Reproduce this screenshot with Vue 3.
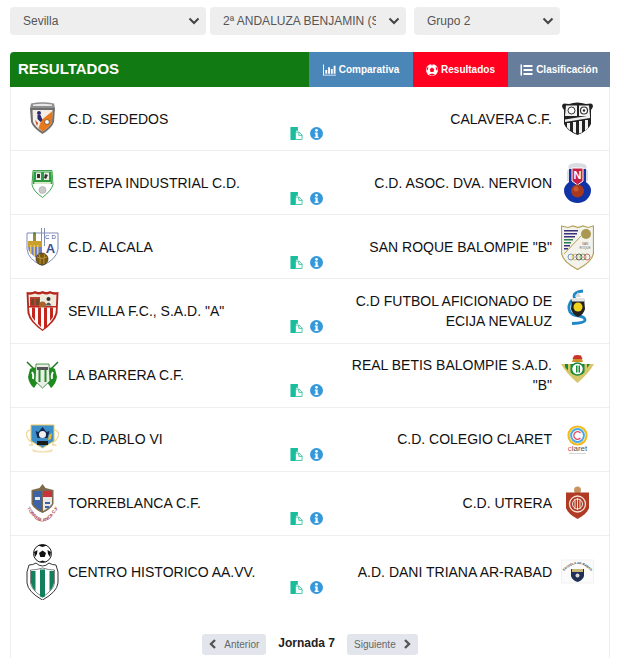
<template>
  <div class="page">
    <div class="filters">
      <div v-for="f in filters" :key="f.value" class="select-wrap" :class="f.size">
        <select class="select">
          <option>{{ f.value }}</option>
        </select>
        <svg class="chevron" viewBox="0 0 12 8"><path d="M1.500 1.500 6 6l4.500-4.500" /></svg>
      </div>
    </div>

    <div class="panel">
      <div class="panel-head">
        <div class="title">RESULTADOS</div>
        <a class="tab tab-blue">
          <svg class="tab-icon" viewBox="0 0 14 12">
            <path d="M0 0h1v11h13v1H0z" />
            <path d="M2.500 6h2v4h-2zM5.500 3h2v7h-2zM8.500 5h2v5h-2zM11.500 1.500h2V10h-2z" />
          </svg>
          Comparativa
        </a>
        <a class="tab tab-red">
          <svg class="tab-icon ball" viewBox="0 0 12 12">
            <circle cx="6" cy="6" r="6" fill="#fff" />
            <path d="M6 3.600 8.300 5.300 7.400 8H4.600L3.700 5.300zM4.200 .6 6 1.500 7.800.6 6 .2zM.6 4.200l.3 2.800 1.100-1.800.3-2.400zM11.400 4.200l-.3 2.800-1.100-1.800-.3-2.400zM3 10.600l2-.9h2l2 .9-3 1.100z" fill="#ff0021" />
          </svg>
          Resultados
        </a>
        <a class="tab tab-slate">
          <svg class="tab-icon" viewBox="0 0 12 12">
            <path d="M0 .5h1.500v11H0zM3 1h9v2H3zM3 5h9v2H3zM3 9h9v2H3z" />
          </svg>
          Clasificación
        </a>
      </div>

      <div v-for="m in matches" :key="m.home" class="match">
        <div class="team">
          <svg class="crest" :height="crests[m.homeCrest].h" :viewBox="`0 0 33 ${crests[m.homeCrest].h}`" v-html="crests[m.homeCrest].art"></svg>
          <span class="name">{{ m.home }}</span>
        </div>
        <div class="actions">
          <svg class="act" viewBox="0 0 13 14">
            <path d="M0 0h8v4H6v10H0z" fill="#1abc9c" />
            <path d="M5.500 5.500h3.800l3.200 3v5h-7z" fill="#fff" stroke="#3cc4a6" />
            <path d="M9 5.500V9h3.500" fill="none" stroke="#3cc4a6" />
          </svg>
          <svg class="act" viewBox="0 0 13 13">
            <circle cx="6.500" cy="6.500" r="6.500" fill="#3498db" />
            <circle cx="6.500" cy="3.300" r="1.400" fill="#fff" />
            <path d="M4.800 5.400h2.900v4.300h.9v1.300H4.600V9.700h.9V6.700h-.7z" fill="#fff" />
          </svg>
        </div>
        <div class="team team-away">
          <span class="name">{{ m.away }}</span>
          <svg class="crest" :height="crests[m.awayCrest].h" :viewBox="`0 0 33 ${crests[m.awayCrest].h}`" v-html="crests[m.awayCrest].art"></svg>
        </div>
      </div>

      <div class="pager">
        <button class="page-btn">
          <svg class="arrow" viewBox="0 0 8 10"><path d="M6 1 2 5l4 4" /></svg>
          Anterior
        </button>
        <span class="round">Jornada 7</span>
        <button class="page-btn">
          Siguiente
          <svg class="arrow" viewBox="0 0 8 10"><path d="m2 1 4 4-4 4" /></svg>
        </button>
      </div>
    </div>
  </div>
</template>

<script setup>
const filters = [
  { value: "Sevilla", size: "wide" },
  { value: "2ª ANDALUZA BENJAMIN (SEVILLA)", size: "wide" },
  { value: "Grupo 2", size: "small" },
];

const matches = [
  { home: "C.D. SEDEDOS", homeCrest: "sededos", away: "CALAVERA C.F.", awayCrest: "calavera" },
  { home: "ESTEPA INDUSTRIAL C.D.", homeCrest: "estepa", away: "C.D. ASOC. DVA. NERVION", awayCrest: "nervion" },
  { home: "C.D. ALCALA", homeCrest: "alcala", away: 'SAN ROQUE BALOMPIE "B"', awayCrest: "roque" },
  { home: 'SEVILLA F.C., S.A.D. "A"', homeCrest: "sevilla", away: "C.D FUTBOL AFICIONADO DE ECIJA NEVALUZ", awayCrest: "ecija" },
  { home: "LA BARRERA C.F.", homeCrest: "barrera", away: 'REAL BETIS BALOMPIE S.A.D. "B"', awayCrest: "betis" },
  { home: "C.D. PABLO VI", homeCrest: "pablo", away: "C.D. COLEGIO CLARET", awayCrest: "claret" },
  { home: "TORREBLANCA C.F.", homeCrest: "torreblanca", away: "C.D. UTRERA", awayCrest: "utrera" },
  { home: "CENTRO HISTORICO AA.VV.", homeCrest: "centro", away: "A.D. DANI TRIANA AR-RABAD", awayCrest: "dani" },
];

// crests are hand drawn, 33 wide, the height keeps them centred on the row
const crests = {
  sededos: {
    h: 46,
    art: `<path d="M5 7.500Q16.500 5 28 7.500L29 12H4z" fill="#8f8f8f"/>
      <path d="M7 8.500Q16.500 7 26 8.500V10H7z" fill="#e8e8e8"/>
      <path d="M4 12h25l-1 14q-2 6-11.500 12Q7 32 5 26z" fill="#6f6f6f"/>
      <path d="M6.500 14h20l-.5 12q-2 5-9.500 9.500Q9 31 7 26z" fill="#f4eee6"/>
      <path d="M26.500 15l-.5 11q-2 5-9.500 9.500l-4-3.500 3-8z" fill="#e97a1c"/>
      <circle cx="13" cy="17" r="2" fill="#2a2a70"/>
      <path d="M11.500 19h3l2 5-2 2-3-3z" fill="#2a2a70"/>
      <path d="M9 24l3 3-1 3z" fill="#c9412c"/>
      <circle cx="21" cy="26" r="2.400" fill="#fff" stroke="#333" stroke-width=".6"/>`,
  },
  calavera: {
    h: 46,
    art: `<path d="M3 14Q-1 9 3 7.500L8 8q8-3 17 0l5-.5q4 1.500 0 6.500v14q-3 7-13.500 11Q6 35 3 28z" fill="#222"/>
      <path d="M5 9.500h11V20H4zM18 9.500h10l1 10.500H18z" fill="#f2f2f2"/>
      <circle cx="10.500" cy="14.500" r="3.500" fill="#fff" stroke="#333"/>
      <circle cx="23" cy="14.500" r="3.500" fill="#fff" stroke="#333" stroke-width="1.200"/>
      <circle cx="23" cy="14.500" r="1.200" fill="#222"/>
      <path d="M4 23.500 29 19.500v2.500L4 26z" fill="#eee"/>
      <path d="M6 27h3v7.500l-3-3zM12 26h3v11.500l-3-1.500zM18 25h3v11.500l-3 1zM24 24h3v8l-3 3z" fill="#f2f2f2"/>`,
  },
  estepa: {
    h: 46,
    art: `<path d="M7 10.500h19l1 14q-1.500 6-10.500 13Q7 31 6 24.500z" fill="#fff" stroke="#3fa34d" stroke-width="1"/>
      <path d="M7.500 11.500h18L26 24H7z" fill="#2f9a3f"/>
      <path d="M10 12.500h5V20h-5zM18 12.500h5V20h-5z" fill="#e8efe6"/>
      <path d="M11 14h3v4h-3zM19 14l3 1-2 4-2-1z" fill="#333"/>
      <path d="M8 22h17l-.5 2H8.500z" fill="#d9e8c6"/>
      <circle cx="16.500" cy="30" r="3.500" fill="#c9c9c9" stroke="#999" stroke-width=".5"/>`,
  },
  nervion: {
    h: 46,
    art: `<path d="M8 9Q6 5 10 4q6-2 13 0 4 1 2 5l2 2v10H6V11z" fill="#d9dde3"/>
      <path d="M8 9h17v13Q30 26 30 30a13.500 13 0 0 1-27 0q0-4 5-8z" fill="#1233a6"/>
      <path d="M11 8h11v13l-5.500 4L11 21z" fill="#c81e45" stroke="#fff" stroke-width="1"/>
      <text x="16.500" y="18.500" font-size="11" font-weight="700" text-anchor="middle" fill="#fff" font-family="Liberation Sans, sans-serif">N</text>
      <circle cx="16.500" cy="31" r="6.500" fill="#a8391c"/>
      <circle cx="15" cy="29" r="2.500" fill="#c75a2e"/>`,
  },
  alcala: {
    h: 46,
    art: `<path d="M1 9h31v16q-1 10-15.500 16.500Q2 36 1 25z" fill="#fff" stroke="#7f8db8" stroke-width="1"/>
      <path d="M15 4h1v18h-1zM18 4h1v18h-1z" fill="#7f8db8"/>
      <path d="M2 21h14v15Q6 33 2.500 26z" fill="#6f7fd0"/>
      <path d="M2 17h14v6H2z" fill="#c9a02c"/>
      <path d="M4 21h1.500v9H4zM7.500 21H9v11H7.500zM11 21h1.500v13H11z" fill="#e2c76b"/>
      <path d="M7 10h3v7H7z" fill="#9c8a3a"/>
      <circle cx="8.500" cy="9.500" r="1.500" fill="#5f8a3a"/>
      <text x="19" y="15" font-size="6" fill="#3d4f92" font-family="Liberation Sans, sans-serif">C</text>
      <text x="25.500" y="15" font-size="6" fill="#3d4f92" font-family="Liberation Sans, sans-serif">D</text>
      <text x="24.500" y="29" font-size="13" font-weight="700" text-anchor="middle" fill="#3d4f92" font-family="Liberation Sans, sans-serif">A</text>
      <circle cx="16" cy="35" r="6" fill="#7a5a16" stroke="#3d3010" stroke-width=".7"/>
      <path d="M11 33q5 3 10 0M13 30q2 5 1 10M19 30q-2 5-1 10" fill="none" stroke="#d0a93e" stroke-width=".7"/>`,
  },
  roque: {
    h: 46,
    art: `<path d="M.5 2 7 3.500 12 2l5 1.500L22 2l5 1.500L32.500 2v26q0 9-16 17.500Q.5 37 .5 28z" fill="#f3f3ec" stroke="#b3a15a" stroke-width="1.200"/>
      <path d="M3 6h14v1.500H3zM3 9h13v1.500H3zM3 12h11v1.500H3z" fill="#3b2f7f"/>
      <path d="M3 15h9v1.500H3zM3 18h7v1.500H3z" fill="#2f7d4f"/>
      <path d="M3 21h6v1.500H3zM3 24h4v1.500H3z" fill="#3b2f7f"/>
      <path d="M3 30 20 12" stroke="#b3a15a" stroke-width="1" fill="none"/>
      <circle cx="25" cy="10" r="5" fill="#a99752"/>
      <text x="24" y="21" font-size="3" text-anchor="middle" fill="#666" font-family="Liberation Sans, sans-serif">SAN</text>
      <text x="24" y="24.500" font-size="3" text-anchor="middle" fill="#666" font-family="Liberation Sans, sans-serif">ROQUE</text>
      <g fill="none" stroke-width=".8"><circle cx="10" cy="33" r="3" stroke="#5a7fc0"/><circle cx="14" cy="33" r="3" stroke="#d9b84a"/><circle cx="18" cy="33" r="3" stroke="#444"/><circle cx="22" cy="33" r="3" stroke="#5aa060"/><circle cx="26" cy="33" r="3" stroke="#c8504a"/></g>`,
  },
  sevilla: {
    h: 46,
    art: `<path d="M.5 4Q6 5 9 3q4 2 7.500 0 4 2 7.500 0 3 2 8.500 1l-1 21q-2 9-15 18Q3.500 34 1.500 25z" fill="#b5261c"/>
      <path d="M2.500 6.500Q6 7 9 5.500q4 2 7.500 0 4 2 7.500 0 3 1.500 6.500 1L30 18H3z" fill="#f0eadc"/>
      <path d="M4 9h10v9H4z" fill="#b9402e"/>
      <path d="M5 11h3v6H5zM10 11h3v6h-3z" fill="#6d4a2a"/>
      <circle cx="22.500" cy="11" r="2" fill="#333"/>
      <path d="M19.500 17.500q3-6 6 0z" fill="#555"/>
      <circle cx="16.500" cy="17" r="3.500" fill="#a8632a"/>
      <path d="M3 19.500h27l-.5 5.500q-2 8-13 16.500Q5 33 3.500 25z" fill="#fff"/>
      <path d="M6 19.500h3V33l-3-4zM12 19.500h3V39l-3-3zM18 19.500h3V39l-3 2zM24 19.500h3V29l-3 4z" fill="#c4261d"/>`,
  },
  ecija: {
    h: 46,
    art: `<path d="M22 3q-9 1-9 5t5 5M11 12Q6 18 9 24q3 4 9 4 6 1 6 4t-13 3.500" fill="none" stroke="#1e88c7" stroke-width="2.800"/>
      <path d="M17 4l3 5h-6z" fill="#d6d6d6"/>
      <path d="M11 10h12l1 11q-1 5-7 8-6-3-7-8z" fill="#222"/>
      <circle cx="17" cy="19" r="4.500" fill="#f1d21c"/>
      <path d="M11 10h12v3.500H11z" fill="#e3e3e3"/>`,
  },
  barrera: {
    h: 46,
    art: `<path d="M1 10l8 8M32 10l-8 8" stroke="#1f7a1f" stroke-width="1.500"/>
      <path d="M4 17q4-3 8 0v13l-4 6q-5-4-6-11z" fill="#1f8a1f"/>
      <path d="M29 17q-4-3-8 0v13l4 6q5-4 6-11z" fill="#1f8a1f"/>
      <path d="M10 12h13l1 17-7.500 7L9 29z" fill="#e9efe6" stroke="#2a7a2a" stroke-width=".8"/>
      <path d="M12.500 18h2v12h-2zM18.500 18h2v12h-2z" fill="#2c8a2c"/>
      <path d="M11 15h11v3H11z" fill="#555"/>
      <path d="M6 20q2 3 1 7M27 20q-2 3-1 7" stroke="#fff" stroke-width="1.800" fill="none"/>`,
  },
  betis: {
    h: 46,
    art: `<path d="M11 10 12 7h9l1 3z" fill="#cf8f24"/>
      <path d="M11.500 7l1.500-3.500L16.500 3l3.500.5L21.500 7z" fill="#c9332a"/>
      <path d="M0 12h33Q28 21 16.500 31 5 21 0 12z" fill="#d8c66a"/>
      <path d="M4 12h3v6.500L4 15zM9.500 12h3v11l-3-3zM20.500 12h3v8l-3 3zM26 12h3l-3 4z" fill="#1a8a3a"/>
      <circle cx="16.500" cy="17" r="6" fill="#fff" stroke="#1a8a3a" stroke-width="1.500"/>
      <path d="M15 13.500h1.500v7H15zM17.500 13.500H19v7h-1.500z" fill="#1a8a3a"/>`,
  },
  pablo: {
    h: 46,
    art: `<path d="M4 14q-4 1-3.500 5t5 7l1 3H3M29 14q4 1 3.500 5t-5 7l-1 3h4" fill="none" stroke="#efd9a0" stroke-width="1.300"/>
      <path d="M5 9h23v16l-11.500 7L5 25z" fill="#3d8fc9" stroke="#e8c65e" stroke-width="1"/>
      <path d="M16.500 11l4 5 3-1-2 7h-10l-2-7 3 1z" fill="#15294f"/>
      <circle cx="16.500" cy="18.500" r="3.500" fill="#f0f0f0"/>
      <path d="M11 25h11v4H11z" fill="#1c1c1c"/>
      <path d="M23 19l3-2-1 6-3 1z" fill="#e8b93a"/>
      <path d="M6 33q10 4 21 0l-1 3q-9 1-19 0z" fill="#f1e2b8"/>`,
  },
  claret: {
    h: 46,
    art: `<circle cx="16.500" cy="19.500" r="9" fill="none" stroke="#f2bb1f" stroke-width="2.200"/>
      <circle cx="16.500" cy="19.500" r="6.400" fill="none" stroke="#49a9e3" stroke-width="2"/>
      <path d="M19.500 17a3.800 3.800 0 1 0 0 5" fill="none" stroke="#e8485c" stroke-width="1.300"/>
      <text x="16.500" y="35" font-size="8" text-anchor="middle" fill="#555" font-family="Liberation Sans, sans-serif"><tspan fill="#e8485c">c</tspan>laret</text>
      <path d="M8 37.500h17" stroke="#cbcbcb" stroke-width=".8"/>`,
  },
  torreblanca: {
    h: 46,
    art: `<path d="M16.500 4l3 4 8 2v14q-2 5-11 9-9-4-11-9V10l8-2z" fill="#7c6a4f"/>
      <path d="M7 11h9v20q-6-3-9-7z" fill="#3d62a8"/>
      <path d="M17 11h9v6h-9z" fill="#c8323c"/>
      <path d="M17 17h9v7q-3 4-9 7z" fill="#e8e8e8"/>
      <path d="M19 22h5v2h-5zM19 26h4v2h-4z" fill="#3d62a8"/>
      <path d="M9 17h5v3H9z" fill="#e8e8e8"/>
      <path id="tb" d="M1 28Q16.500 55 32 28" fill="none"/>
      <text font-size="4.500" font-weight="700" fill="#a53a4d" font-family="Liberation Sans, sans-serif"><textPath href="#tb">TORREBLANCA C.F</textPath></text>`,
  },
  utrera: {
    h: 46,
    art: `<circle cx="16.500" cy="10" r="3.500" fill="#c79463"/>
      <path d="M5 12.500h23V28q-2 6-11.500 11Q7 34 5 28z" fill="#b03a24"/>
      <circle cx="16.500" cy="24" r="8" fill="none" stroke="#f3e6da" stroke-width="1.300"/>
      <circle cx="16.500" cy="24" r="5" fill="none" stroke="#f3e6da" stroke-width="1"/>
      <path d="M14 19v10M16.500 18v12M19 19v10" stroke="#f3e6da" stroke-width="1"/>`,
  },
  dani: {
    h: 46,
    art: `<path d="M.5 11h32v23H.5z" fill="#fbfbfb" stroke="#f1f1f1"/>
      <path id="dn" d="M3 22Q16.500 8 30 22" fill="none"/>
      <text font-size="3" font-weight="700" fill="#333" font-family="Liberation Sans, sans-serif"><textPath href="#dn">ESCUELA AR-RABAD</textPath></text>
      <path d="M10 20h13v7q-1 4-6.500 6Q11 31 10 27z" fill="#1f2f55"/>
      <path d="M11 20h11v3H11z" fill="#c9b777"/>
      <circle cx="16.500" cy="26.500" r="2" fill="#d9d9d9"/>`,
  },
  centro: {
    h: 56,
    art: `<circle cx="16.500" cy="9.500" r="9" fill="#fff" stroke="#222" stroke-width="1"/>
      <path d="M16.500 6.500l3.500 2.500-1.300 4h-4.400l-1.300-4zM12 1.500l4.500 1.500L21 1.500 16.500 .5zM8 8l1 5 2-3 .5-4zM25 8l-1 5-2-3-.5-4zM13 18l3.500-1.500L20 18z" fill="#111"/>
      <path d="M3 21q4 0 7-2 3 3 6.500 3t6.500-3q3 2 7 2l2 7v11q-1 9-15.500 17Q2 48 1 39V28z" fill="#fff" stroke="#333" stroke-width="1"/>
      <path d="M4.500 26q6 0 12-2 6 2 12 2V39q-1 7-12 14Q5.500 46 4.500 39z" fill="#fff" stroke="#333" stroke-width=".6"/>
      <path d="M5 27h4.500v20Q6 44 5 39zM14 25.500h5V52.500l-2.500 1-2.500-1zM23.500 27H28v12q-1 5-4.500 8z" fill="#12805c"/>`,
  },
};
</script>

<style>
html,
body {
  overflow: hidden;
}
</style>

<style scoped>
.page {
  padding: 7px 7px 0 10px;
  font-family: "Liberation Sans", Arial, sans-serif;
  color: #111;
}

.filters {
  display: flex;
  gap: 4px;
  margin-bottom: 17px;
}

.select-wrap {
  position: relative;
  height: 28px;
}

.select-wrap.wide {
  width: 196px;
}

.select-wrap.small {
  width: 146px;
  margin-left: 4px;
}

.select {
  width: 100%;
  height: 100%;
  padding: 0 30px 0 13px;
  border: none;
  border-radius: 4px;
  background: #eee;
  color: #555;
  font-family: inherit;
  font-size: 12px;
  appearance: none;
}

.chevron {
  position: absolute;
  top: 10px;
  right: 6px;
  width: 12px;
  height: 8px;
  pointer-events: none;
}

.chevron path {
  fill: none;
  stroke: #444;
  stroke-width: 2;
}

.panel {
  border: 1px solid #eee;
  border-top: none;
  border-radius: 4px 4px 0 0;
  background: #fff;
}

.panel-head {
  display: flex;
  height: 35px;
  margin: 0 -1px;
  color: #fff;
}

.title {
  flex: 1;
  padding-left: 8px;
  background: #117a12;
  border-top-left-radius: 4px;
  font-size: 15px;
  font-weight: 700;
  line-height: 34px;
}

.tab {
  display: flex;
  align-items: center;
  justify-content: center;
  gap: 3px;
  font-size: 10px;
  font-weight: 700;
}

.tab-blue {
  width: 104px;
  background: #4b86b8;
}

.tab-red {
  width: 95px;
  background: #ff0021;
}

.tab-slate {
  width: 102px;
  background: #667d9c;
}

.tab-icon {
  width: 13px;
  height: 12px;
  fill: #fff;
}

.ball {
  width: 12px;
}

.match {
  display: grid;
  grid-template-columns: 264px 33px 1fr;
  align-items: center;
  min-height: 47.15px;
  padding: 8px 15px;
  border-bottom: 1px solid #eee;
  font-size: 14px;
  line-height: 20px;
}

.match:nth-last-child(2) {
  border-bottom: none;
}

.team {
  display: flex;
  align-items: center;
  gap: 9px;
}

.team-away {
  justify-content: flex-end;
  text-align: right;
}

.team-away .name {
  max-width: 205px;
}

.crest {
  flex: none;
  width: 33px;
}

.actions {
  display: flex;
  justify-content: space-between;
  margin-top: 30.6px;
}

.act {
  width: 13px;
  height: 13px;
}

.pager {
  display: flex;
  justify-content: center;
  align-items: flex-start;
  gap: 12px;
  margin-top: 26px;
  height: 40px;
}

.page-btn {
  display: flex;
  align-items: center;
  gap: 7px;
  height: 21px;
  padding: 0 7px;
  border: none;
  border-radius: 3px;
  background: #e2e6ec;
  color: #666;
  font-family: inherit;
  font-size: 10px;
}

.arrow {
  width: 8px;
  height: 10px;
}

.arrow path {
  fill: none;
  stroke: #555;
  stroke-width: 2.400;
}

.round {
  font-size: 12px;
  font-weight: 700;
  line-height: 18px;
  color: #222;
}
</style>
